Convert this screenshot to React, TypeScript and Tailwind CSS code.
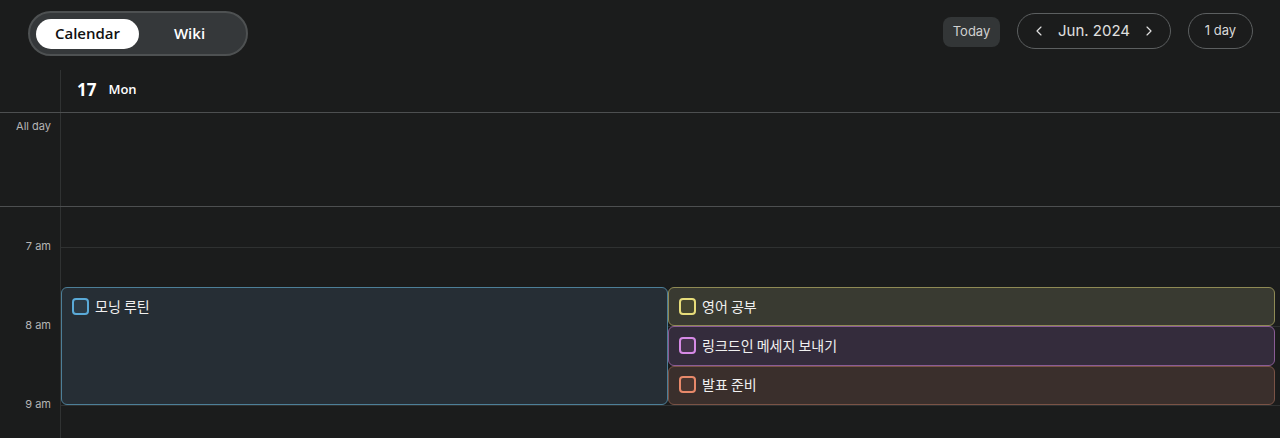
import { ChevronLeft, ChevronRight } from "lucide-react";

const events = [
  { title: "영어 공부", box: "border-[#8f8a55] bg-[#393a31]", check: "border-[#e6dc7a] bg-[#45462f]" },
  { title: "링크드인 메세지 보내기", box: "border-[#8a5c96] bg-[#342c3c]", check: "border-[#d68ae6] bg-[#45344d]" },
  { title: "발표 준비", box: "border-[#7a5346] bg-[#3a2f2c]", check: "border-[#e8896a] bg-[#4a3630]" },
];

const hours = ["7 am", "8 am", "9 am"];

export default function App() {
  return (
    <div className="h-[438px] w-full overflow-hidden bg-[#1b1c1c] text-white font-['Inter',sans-serif]">
      {/* Top bar */}
      <header className="h-[70px] flex items-start justify-between pl-7 pr-[27px] pt-[11px]">
        <div className="flex items-center h-[45px] w-[220px] rounded-full border-2 border-[#4e5152] bg-[#35383a] px-[6px] font-['Open_Sans',sans-serif] font-semibold text-[15px]">
          <div className="h-[30px] w-[103px] rounded-full bg-white text-[#111] flex items-center justify-center">
            Calendar
          </div>
          <div className="flex-1 flex items-center justify-center text-white">Wiki</div>
        </div>

        <div className="flex items-center gap-[17px] mt-[2px]">
          <button className="h-[30px] w-[57px] mt-[1px] rounded-lg bg-[#333637] text-[13px] text-[#d0d0d0]">Today</button>
          <div className="h-[36px] w-[154px] rounded-full border border-[#5c5f60] flex items-center justify-between px-[13px] text-[#e0e0e0]">
            <ChevronLeft className="h-4 w-4" strokeWidth={1.75} />
            <span className="text-[15px]">Jun. 2024</span>
            <ChevronRight className="h-4 w-4" strokeWidth={1.75} />
          </div>
          <button className="h-[36px] w-[65px] rounded-full border border-[#5c5f60] text-[13px] text-[#d8d8d8]">1 day</button>
        </div>
      </header>

      {/* Day header */}
      <div className="flex h-[43px] border-b border-[#4d4f50]">
        <div className="w-[61px] border-r border-[#303232]" />
        <div className="flex items-center gap-[12px] pl-[16px] pb-[3px] font-['Open_Sans',sans-serif]">
          <span className="text-[17px] font-bold">17</span>
          <span className="text-[13px] font-semibold">Mon</span>
        </div>
      </div>

      {/* All day row */}
      <div className="flex h-[94px] border-b border-[#4d4f50]">
        <div className="w-[61px] border-r border-[#303232] pr-[9px] pt-[5px] text-right text-[11px] text-[#b5b5b5]">
          All day
        </div>
        <div className="flex-1" />
      </div>

      {/* Time grid */}
      <div className="flex">
        <div className="w-[61px] border-r border-[#303232] pt-[32px] pr-[9px] text-right text-[11px] text-[#b5b5b5]">
          {hours.map((h) => (
            <div key={h} className="h-[79px] leading-[15px]">{h}</div>
          ))}
        </div>
        <div className="relative flex-1 pt-[40px]">
          {hours.map((h) => (
            <div key={h} className="h-[79px] border-t border-[#2f3131]" />
          ))}

          <div className="absolute top-[80px] left-0 right-[5px] h-[118px] grid grid-cols-2">
            <div className="rounded-md border border-[#4d7f98] bg-[#262e35] pl-[10px] pt-[8px]">
              <div className="flex items-center gap-[6px]">
                <span className="h-[17px] w-[17px] rounded-[4px] border-2 border-[#5aaad8] bg-[#2c3b46]" />
                <span className="text-[14px] text-[#f0f0f0] font-['Noto_Sans_CJK_KR',sans-serif]">모닝 루틴</span>
              </div>
            </div>
            <div className="flex flex-col">
              {events.map((e) => (
                <div key={e.title} className={`h-[39.33px] rounded-md border ${e.box} pl-[10px] pb-[1px] flex items-center`}>
                  <div className="flex items-center gap-[6px]">
                    <span className={`h-[17px] w-[17px] rounded-[4px] border-2 ${e.check}`} />
                    <span className="text-[14px] text-[#f0f0f0] font-['Noto_Sans_CJK_KR',sans-serif]">{e.title}</span>
                  </div>
                </div>
              ))}
            </div>
          </div>
        </div>
      </div>
    </div>
  );
}
